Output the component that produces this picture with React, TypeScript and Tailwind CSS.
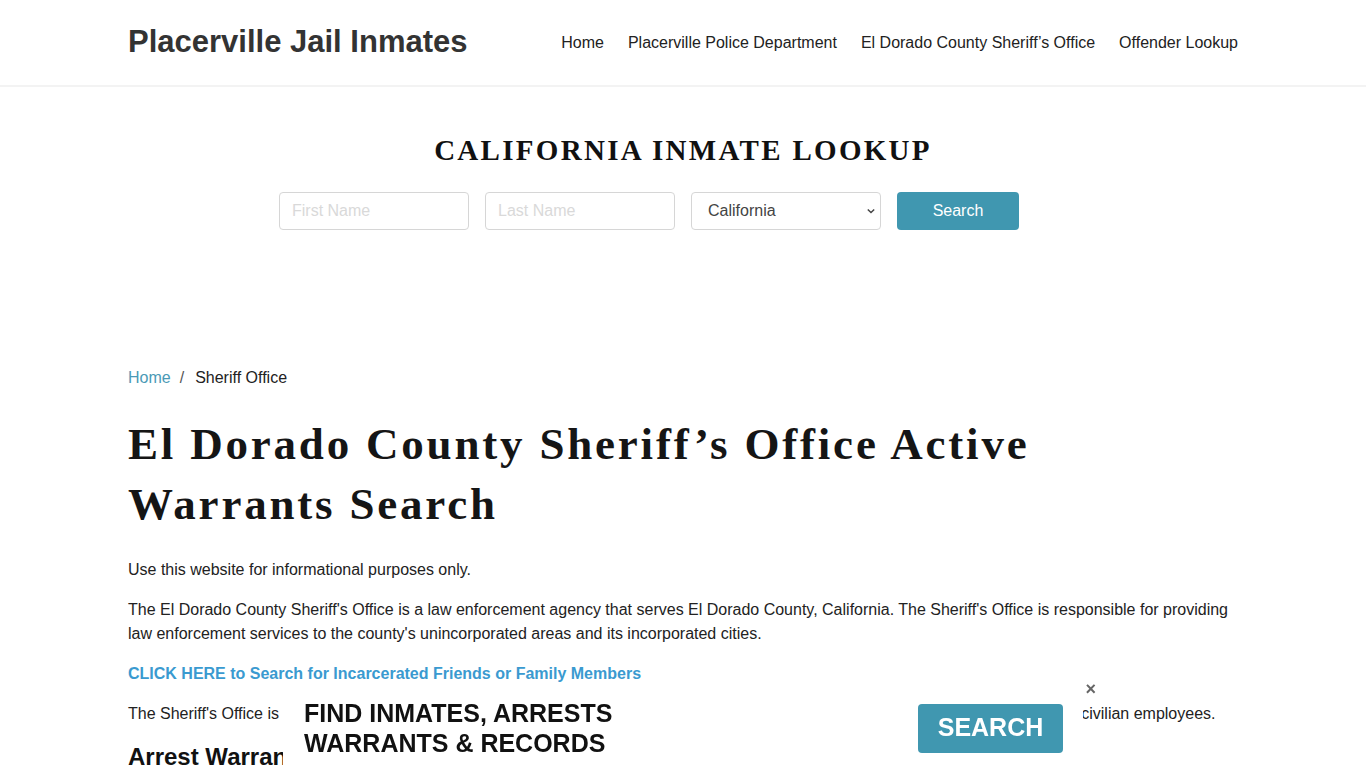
import { useState } from "react";

const sans = { fontFamily: '"Liberation Sans", Arial, sans-serif' };

function Header() {
  const links = [
    "Home",
    "Placerville Police Department",
    "El Dorado County Sheriff’s Office",
    "Offender Lookup",
  ];
  return (
    <header className="border-b-2 border-[#f3f3f3] bg-white">
      <div className="mx-auto flex h-[85px] w-[1110px] items-center justify-between">
        <a href="#" className="text-[31px] font-bold text-[#333]">
          Placerville Jail Inmates
        </a>
        <nav className="flex gap-6 text-base text-[#222]">
          {links.map((l) => (
            <a key={l} href="#">
              {l}
            </a>
          ))}
        </nav>
      </div>
    </header>
  );
}

function LookupForm() {
  return (
    <section className="pt-[46px] pb-[136px]">
      <h2
        className="text-center text-[29px] leading-[34px] font-bold tracking-[2.3px] text-[#111]"
        style={{ fontFamily: '"Liberation Serif", "Times New Roman", serif' }}
      >
        CALIFORNIA INMATE LOOKUP
      </h2>
      <form className="mt-[25px] flex justify-center gap-4 pr-[68px]">
        <input
          placeholder="First Name"
          className="h-[38px] w-[190px] rounded border border-[#d6d6d6] px-3 text-base text-[#444] placeholder:text-[#d9d9d9] focus:outline-none"
        />
        <input
          placeholder="Last Name"
          className="h-[38px] w-[190px] rounded border border-[#d6d6d6] px-3 text-base text-[#444] placeholder:text-[#d9d9d9] focus:outline-none"
        />
        <div className="relative h-[38px] w-[190px]">
          <select className="h-full w-full appearance-none rounded border border-[#d6d6d6] bg-white pl-4 text-base text-[#444]">
            <option>California</option>
          </select>
          <svg
            viewBox="0 0 10 10"
            className="pointer-events-none absolute top-[15px] right-[6px] h-[8px] w-[8px]"
          >
            <path d="M1 3 L5 7 L9 3" fill="none" stroke="#444" strokeWidth="1.8" />
          </svg>
        </div>
        <button
          type="button"
          className="h-[38px] w-[122px] rounded bg-[#4097b0] text-base text-white"
        >
          Search
        </button>
      </form>
    </section>
  );
}

function Content() {
  return (
    <main className="mx-auto w-[1110px] text-base leading-6 text-[#222]">
      <div className="flex items-center">
        <a href="#" className="text-[#4a9ab6]">
          Home
        </a>
        <span className="pr-[11px] pl-[9px] text-[#555]">/</span>
        <span>Sheriff Office</span>
      </div>
      <h1
        className="mt-6 w-[960px] text-[45px] leading-[60px] font-bold tracking-[2.8px] text-[#151515]"
        style={{ fontFamily: '"Liberation Serif", "Times New Roman", serif' }}
      >
        El Dorado County Sheriff’s Office Active Warrants Search
      </h1>
      <p className="mt-6">Use this website for informational purposes only.</p>
      <p className="mt-4">
        The El Dorado County Sheriff's Office is a law enforcement agency that serves El
        Dorado County, California. The Sheriff's Office is responsible for providing law
        enforcement services to the county's unincorporated areas and its incorporated
        cities.
      </p>
      <p className="mt-4">
        <a href="#" className="font-bold text-[#3a9ad0]">
          CLICK HERE to Search for Incarcerated Friends or Family Members
        </a>
      </p>
      <p className="mt-4">
        The Sheriff's Office is headed by the elected Sheriff, who oversees sworn deputies,
        correctional officers, dispatchers, support staff and civilian employees.
      </p>
      <h2 className="mt-4 text-2xl leading-[29px] font-bold text-[#111]">
        Arrest Warrants in El Dorado County
      </h2>
      <p className="mt-4 pb-40">
        An arrest warrant is a legal document issued by a judge that authorizes law
        enforcement to take a person into custody.
      </p>
    </main>
  );
}

function BottomBanner() {
  const [open, setOpen] = useState(true);
  if (!open) return null;
  return (
    <div className="fixed bottom-0 left-1/2 flex h-[80px] w-[800px] -translate-x-1/2 items-center justify-between bg-white pr-5 pl-[21px]">
      <div className="text-[25px] leading-[30px] font-bold text-[#111] uppercase">
        Find Inmates, Arrests
        <br />
        Warrants &amp; Records
      </div>
      <button
        type="button"
        className="h-[49px] w-[145px] rounded bg-[#4097b0] text-[25px] font-bold text-white"
      >
        SEARCH
      </button>
      <button
        type="button"
        onClick={() => setOpen(false)}
        className="absolute top-[-8px] right-[-13px] text-[18px] leading-none font-bold text-[#666]"
      >
        ×
      </button>
    </div>
  );
}

export default function App() {
  return (
    <div className="min-h-screen bg-white" style={sans}>
      <Header />
      <LookupForm />
      <Content />
      <BottomBanner />
    </div>
  );
}
